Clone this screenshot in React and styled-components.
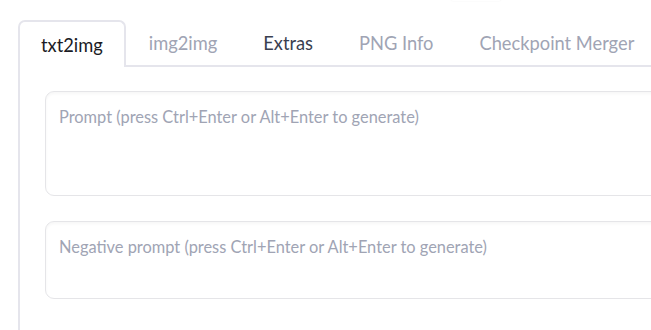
import React from "react";
import styled, { createGlobalStyle } from "styled-components";

const Global = createGlobalStyle`
  html, body { margin: 0; padding: 0; background: #fff; overflow: hidden; }
  body { font-family: "Source Sans Pro", "Lato", "Noto Sans", sans-serif; }
`;

const Page = styled.div`
  width: 651px;
  height: 330px;
  overflow: hidden;
  padding: 20px 0 0 18px;
  box-sizing: border-box;
  position: relative;
`;

const TopGhost = styled.div`
  position: absolute;
  top: -4px;
  left: 451px;
  width: 50px;
  height: 5px;
  border-radius: 3px;
  box-shadow: 0 0 2px rgba(0,0,0,0.06);
`;

const Wrap = styled.div`
  width: 760px;
`;

const TabBar = styled.div`
  display: flex;
  align-items: stretch;
  height: 47px;
`;

const Tab = styled.div`
  box-sizing: border-box;
  display: flex;
  align-items: center;
  font-size: 18.3px;
  white-space: nowrap;
  color: ${p => p.$color};
  ${p =>
    p.$active
      ? `
    padding: 0 21px;
    border: 2px solid #e5e5ec;
    border-bottom: none;
    border-radius: 7px 7px 0 0;
  `
      : `
    padding: 0 23px;
    border-bottom: 2px solid #e5e5ec;
  `}
`;

const Filler = styled.div`
  flex: 1;
  border-bottom: 2px solid #e5e5ec;
`;

const Panel = styled.div`
  border-left: 2px solid #e5e5ec;
  padding: 24px 0 40px 25px;
  display: flex;
  flex-direction: column;
  gap: 25px;
`;

const Field = styled.div`
  box-sizing: border-box;
  width: 700px;
  height: ${p => p.$h}px;
  border: 1px solid #e5e5e8;
  border-radius: 9px;
  box-shadow: inset 0 2px 3px rgba(0, 0, 0, 0.035);
  padding: 14px 13px;
  font-size: 16.4px;
  line-height: 22px;
  color: #a0a4b4;
  white-space: nowrap;
`;

export default function App() {
  return (
    <>
      <Global />
      <Page>
        <TopGhost />
        <Wrap>
          <TabBar>
            <Tab $active $color="#1b1b24">txt2img</Tab>
            <Tab $color="#a0a4b4">img2img</Tab>
            <Tab $color="#3a3f50">Extras</Tab>
            <Tab $color="#a0a4b4">PNG Info</Tab>
            <Tab $color="#a0a4b4">Checkpoint Merger</Tab>
            <Filler />
          </TabBar>
          <Panel>
            <Field $h={105}>Prompt (press Ctrl+Enter or Alt+Enter to generate)</Field>
            <Field $h={78}>Negative prompt (press Ctrl+Enter or Alt+Enter to generate)</Field>
          </Panel>
        </Wrap>
      </Page>
    </>
  );
}
